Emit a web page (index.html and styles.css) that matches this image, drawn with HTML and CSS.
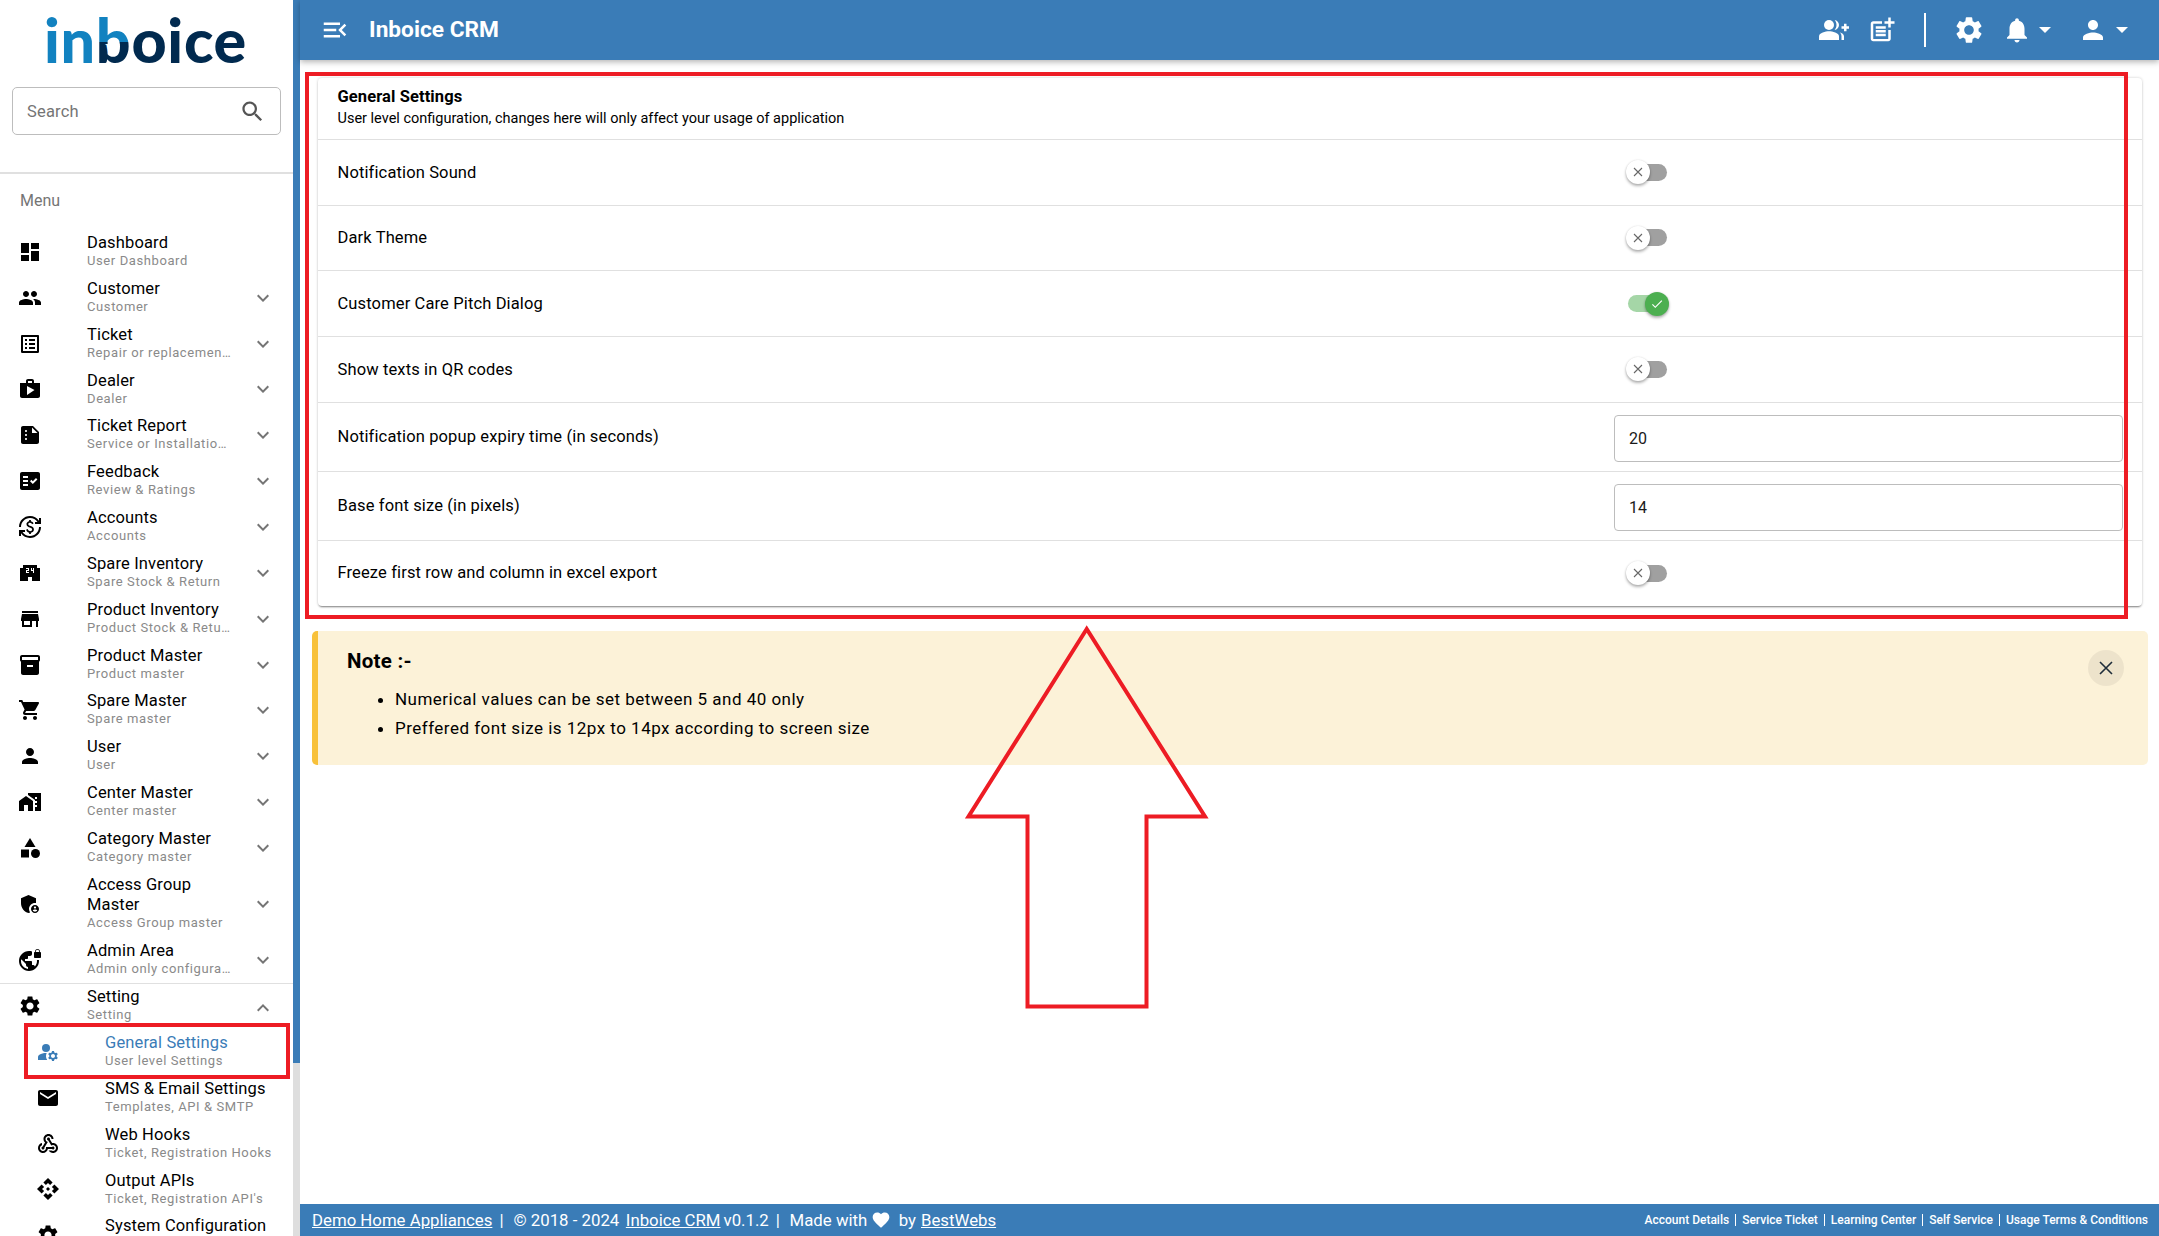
FILE: index.html
```html
<!DOCTYPE html>
<html lang="en">
<head>
<meta charset="utf-8">
<title>Inboice CRM</title>
<link rel="stylesheet" href="styles.css">
</head>
<body>
<svg class="sprite" xmlns="http://www.w3.org/2000/svg">
<symbol id="i-dashboard" viewBox="0 0 24 24"><path d="M3 13h8V3H3v10zm0 8h8v-6H3v6zm10 0h8V11h-8v10zm0-18v6h8V3h-8z"/></symbol>
<symbol id="i-people" viewBox="0 0 24 24"><path d="M16 11c1.66 0 2.99-1.34 2.99-3S17.66 5 16 5c-1.66 0-3 1.34-3 3s1.34 3 3 3zm-8 0c1.66 0 2.99-1.34 2.99-3S9.66 5 8 5C6.34 5 5 6.34 5 8s1.34 3 3 3zm0 2c-2.33 0-7 1.17-7 3.5V19h14v-2.5c0-2.33-4.67-3.5-7-3.5zm8 0c-.29 0-.62.02-.97.05 1.16.84 1.97 1.97 1.97 3.45V19h6v-2.5c0-2.33-4.67-3.5-7-3.5z"/></symbol>
<symbol id="i-list" viewBox="0 0 24 24"><path d="M19 5v14H5V5h14m1.1-2H3.9c-.5 0-.9.4-.9.9v16.2c0 .4.4.9.9.9h16.2c.4 0 .9-.5.9-.9V3.9c0-.5-.5-.9-.9-.9zM11 7h6v2h-6V7zm0 4h6v2h-6v-2zm0 4h6v2h-6zM7 7h2v2H7zm0 4h2v2H7zm0 4h2v2H7z"/></symbol>
<symbol id="i-shop" viewBox="0 0 24 24"><path d="M16 6V4c0-1.11-.89-2-2-2h-4c-1.11 0-2 .89-2 2v2H2v13c0 1.11.89 2 2 2h16c1.11 0 2-.89 2-2V6h-6zM10 4h4v2h-4V4zM9 18V9l7.5 4L9 18z"/></symbol>
<symbol id="i-summarize" viewBox="0 0 24 24"><path d="M15 3H5c-1.1 0-1.99.9-1.99 2L3 19c0 1.1.89 2 1.99 2H19c1.1 0 2-.9 2-2V9l-6-6zM8 17c-.55 0-1-.45-1-1s.45-1 1-1 1 .45 1 1-.45 1-1 1zm0-4c-.55 0-1-.45-1-1s.45-1 1-1 1 .45 1 1-.45 1-1 1zm0-4c-.55 0-1-.45-1-1s.45-1 1-1 1 .45 1 1-.45 1-1 1zm6 1V4.5l5.5 5.5H14z"/></symbol>
<symbol id="i-fact" viewBox="0 0 24 24"><path d="M20 3H4c-1.1 0-2 .9-2 2v14c0 1.1.9 2 2 2h16c1.1 0 2-.9 2-2V5c0-1.1-.9-2-2-2zM10 17H5v-2h5v2zm0-4H5v-2h5v2zm0-4H5V7h5v2zm4.82 6L12 12.16l1.41-1.41 1.41 1.42L17.99 9l1.42 1.42L14.82 15z"/></symbol>
<symbol id="i-exchange" viewBox="0 0 24 24"><path d="M12.89 11.1c-1.78-.59-2.64-.96-2.64-1.9 0-1.02 1.11-1.39 1.81-1.39 1.31 0 1.79.99 1.9 1.34l1.58-.67c-.15-.44-.82-1.91-2.66-2.23V5h-1.75v1.26c-2.6.56-2.62 2.85-2.62 2.96 0 2.27 2.25 2.91 3.35 3.31 1.58.56 2.28 1.07 2.28 2.03 0 1.13-1.05 1.61-1.98 1.61-1.82 0-2.34-1.87-2.4-2.09l-1.66.67c.63 2.19 2.28 2.78 3.02 2.96V19h1.75v-1.24c.52-.09 3.02-.59 3.02-3.22.01-1.39-.6-2.61-3-3.44zM3 21H1v-6h6v2H4.52c1.61 2.41 4.36 4 7.48 4 4.97 0 9-4.03 9-9h2c0 6.08-4.92 11-11 11-3.72 0-7.01-1.85-9-4.67V21zm-2-9C1 5.92 5.92 1 12 1c3.72 0 7.01 1.85 9 4.67V3h2v6h-6V7h2.48C17.87 4.59 15.12 3 12 3c-4.97 0-9 4.03-9 9H1z"/></symbol>
<symbol id="i-conv" viewBox="0 0 24 24"><path d="M19 7V4H5v3H2v13h8v-4h4v4h8V7h-3zm-8 3H9v1h2v1H8V9h2V8H8V7h3v3zm5 2h-1v-2h-2V7h1v2h1V7h1v5z"/></symbol>
<symbol id="i-store" viewBox="0 0 24 24"><path d="M20 4H4v2h16V4zm1 10v-2l-1-5H4l-1 5v2h1v6h10v-6h4v6h2v-6h1zm-9 4H6v-4h6v4z"/></symbol>
<symbol id="i-inventory" viewBox="0 0 24 24"><path d="M20 2H4c-1 0-2 .9-2 2v3.01c0 .72.43 1.34 1 1.69V20c0 1.1 1.1 2 2 2h14c.9 0 2-.9 2-2V8.7c.57-.35 1-.97 1-1.69V4c0-1.1-1-2-2-2zm-5 12H9v-2h6v2zm5-7H4V4h16v3z"/></symbol>
<symbol id="i-cart" viewBox="0 0 24 24"><path d="M7 18c-1.1 0-1.99.9-1.99 2S5.9 22 7 22s2-.9 2-2-.9-2-2-2zM1 2v2h2l3.6 7.59-1.35 2.45c-.16.28-.25.61-.25.96 0 1.1.9 2 2 2h12v-2H7.42c-.14 0-.25-.11-.25-.25l.03-.12.9-1.63h7.45c.75 0 1.41-.41 1.75-1.03l3.58-6.49c.08-.14.12-.31.12-.48 0-.55-.45-1-1-1H5.21l-.94-2H1zm16 16c-1.1 0-1.99.9-1.99 2s.89 2 1.99 2 2-.9 2-2-.9-2-2-2z"/></symbol>
<symbol id="i-person" viewBox="0 0 24 24"><path d="M12 12c2.21 0 4-1.79 4-4s-1.79-4-4-4-4 1.79-4 4 1.79 4 4 4zm0 2c-2.67 0-8 1.34-8 4v2h16v-2c0-2.66-5.33-4-8-4z"/></symbol>
<symbol id="i-home" viewBox="0 0 24 24"><path d="M1 11v10h5v-6h4v6h5V11L8 6z"/><path d="M10 3v1.97l7 5V11h2v2h-2v2h2v2h-2v4h6V3H10zm9 6h-2V7h2v2z"/></symbol>
<symbol id="i-category" viewBox="0 0 24 24"><path d="M12 2l-5.5 9h11z"/><circle cx="17.5" cy="17.5" r="4.5"/><path d="M3 13.5h8v8H3z"/></symbol>
<symbol id="i-admin" viewBox="0 0 24 24"><path d="M17 11c.34 0 .67.04 1 .09V6.27L10.5 3 3 6.27v4.91c0 4.54 3.2 8.79 7.5 9.82.55-.13 1.08-.32 1.6-.55-.69-.98-1.1-2.17-1.1-3.45 0-3.31 2.69-6 6-6z"/><path d="M17 13c-2.21 0-4 1.79-4 4s1.79 4 4 4 4-1.79 4-4-1.79-4-4-4zm0 1.38c.62 0 1.12.51 1.12 1.12s-.51 1.12-1.12 1.12-1.12-.51-1.12-1.12.5-1.12 1.12-1.12zm0 5.37c-.93 0-1.74-.46-2.24-1.17.05-.72 1.51-1.08 2.24-1.08s2.19.36 2.24 1.08c-.5.71-1.31 1.17-2.24 1.17z"/></symbol>
<symbol id="i-vpn" viewBox="0 0 24 24"><path d="M22 4v-.5C22 2.12 20.88 1 19.5 1S17 2.12 17 3.5V4c-.55 0-1 .45-1 1v4c0 .55.45 1 1 1h5c.55 0 1-.45 1-1V5c0-.55-.45-1-1-1zm-.8 0h-3.4v-.5c0-.94.76-1.7 1.7-1.7s1.7.76 1.7 1.7V4zm-2.28 8c.04.33.08.66.08 1 0 2.08-.8 3.97-2.1 5.39-.26-.81-1-1.39-1.9-1.39h-1v-3c0-.55-.45-1-1-1H7v-2h2c.55 0 1-.45 1-1V8h2c1.1 0 2-.9 2-2V3.46c-.95-.3-1.95-.46-3-.46C5.48 3 1 7.48 1 13s4.48 10 10 10 10-4.48 10-10c0-.34-.02-.67-.05-1h-2.03zM10 20.93c-3.95-.49-7-3.85-7-7.93 0-.62.08-1.21.21-1.79L8 16v1c0 1.1.9 2 2 2v1.93z"/></symbol>
<symbol id="i-settings" viewBox="0 0 24 24"><path d="M19.14 12.94c.04-.3.06-.61.06-.94 0-.32-.02-.64-.07-.94l2.03-1.58c.18-.14.23-.41.12-.61l-1.92-3.32c-.12-.22-.37-.29-.59-.22l-2.39.96c-.5-.38-1.03-.7-1.62-.94l-.36-2.54c-.04-.24-.24-.41-.48-.41h-3.84c-.24 0-.43.17-.47.41l-.36 2.54c-.59.24-1.13.57-1.62.94l-2.39-.96c-.22-.08-.47 0-.59.22L2.74 8.87c-.12.21-.08.47.12.61l2.03 1.58c-.05.3-.09.63-.09.94s.02.64.07.94l-2.03 1.58c-.18.14-.23.41-.12.61l1.92 3.32c.12.22.37.29.59.22l2.39-.96c.5.38 1.03.7 1.62.94l.36 2.54c.05.24.24.41.48.41h3.84c.24 0 .44-.17.47-.41l.36-2.54c.59-.24 1.13-.56 1.62-.94l2.39.96c.22.08.47 0 .59-.22l1.92-3.32c.12-.22.07-.47-.12-.61l-2.01-1.58zM12 15.6c-1.98 0-3.6-1.62-3.6-3.6s1.62-3.6 3.6-3.6 3.6 1.62 3.6 3.6-1.62 3.6-3.6 3.6z"/></symbol>
<symbol id="i-manage" viewBox="0 0 24 24"><circle cx="10" cy="8" r="4"/><path d="M10.67 13.02c-.22-.01-.44-.02-.67-.02-2.42 0-4.68.67-6.61 1.82-.88.52-1.39 1.5-1.39 2.53V20h9.26c-.79-1.13-1.26-2.51-1.26-4 0-1.07.25-2.07.67-2.98z"/><path d="M20.75 16c0-.22-.03-.42-.06-.63l1.14-1.01-1-1.73-1.45.49c-.32-.27-.68-.48-1.08-.63L18 11h-2l-.3 1.49c-.4.15-.76.36-1.08.63l-1.45-.49-1 1.73 1.14 1.01c-.03.21-.06.41-.06.63s.03.42.06.63l-1.14 1.01 1 1.73 1.45-.49c.32.27.68.48 1.08.63L16 21h2l.3-1.49c.4-.15.76-.36 1.08-.63l1.45.49 1-1.73-1.14-1.01c.03-.21.06-.41.06-.63zM17 18c-1.1 0-2-.9-2-2s.9-2 2-2 2 .9 2 2-.9 2-2 2z"/></symbol>
<symbol id="i-email" viewBox="0 0 24 24"><path d="M20 4H4c-1.1 0-1.99.9-1.99 2L2 18c0 1.1.9 2 2 2h16c1.1 0 2-.9 2-2V6c0-1.1-.9-2-2-2zm0 4l-8 5-8-5V6l8 5 8-5v2z"/></symbol>
<symbol id="i-webhook" viewBox="0 0 24 24"><path d="M10 15h5.88c.27-.31.67-.5 1.12-.5.83 0 1.5.67 1.5 1.5s-.67 1.5-1.5 1.5c-.44 0-.84-.19-1.12-.5H11.9c-.46 2.28-2.48 4-4.9 4-2.76 0-5-2.24-5-5 0-2.42 1.72-4.44 4-4.9v2.07c-1.16.41-2 1.53-2 2.83 0 1.65 1.35 3 3 3s3-1.35 3-3v-1zm2.5-11c1.65 0 3 1.35 3 3h2c0-2.76-2.24-5-5-5s-5 2.24-5 5c0 1.43.6 2.71 1.55 3.62l-2.35 3.9c-.68.14-1.2.75-1.2 1.48 0 .83.67 1.5 1.5 1.5s1.5-.67 1.5-1.5c0-.16-.02-.31-.07-.45l3.38-5.63C10.49 9.61 9.5 8.42 9.5 7c0-1.65 1.35-3 3-3zm4.5 9c-.64 0-1.23.2-1.72.54l-3.05-5.07C11.53 8.35 11 7.74 11 7c0-.83.67-1.5 1.5-1.5S14 6.17 14 7c0 .15-.02.29-.06.43l2.19 3.65c.28-.05.57-.08.87-.08 2.76 0 5 2.24 5 5s-2.24 5-5 5c-1.85 0-3.47-1.01-4.33-2.5h2.67c.48.32 1.05.5 1.66.5 1.65 0 3-1.35 3-3s-1.35-3-3-3z"/></symbol>
<symbol id="i-api" viewBox="0 0 24 24"><path d="M14 12l-2 2-2-2 2-2 2 2zm-2-6l2.12 2.12 2.5-2.5L12 1 7.38 5.62l2.5 2.5L12 6zm-6 6l2.12-2.12-2.5-2.5L1 12l4.62 4.62 2.5-2.5L6 12zm12 0l-2.12 2.12 2.5 2.5L23 12l-4.62-4.62-2.5 2.5L18 12zm-6 6l-2.12-2.12-2.5 2.5L12 23l4.62-4.62-2.5-2.5L12 18z"/></symbol>
<symbol id="i-more" viewBox="0 0 24 24"><path d="M16.59 8.59L12 13.17 7.41 8.59 6 10l6 6 6-6z"/></symbol>
<symbol id="i-less" viewBox="0 0 24 24"><path d="M12 8l-6 6 1.41 1.41L12 10.83l4.59 4.58L18 14z"/></symbol>
<symbol id="i-search" viewBox="0 0 24 24"><path d="M15.5 14h-.79l-.28-.27C15.41 12.59 16 11.11 16 9.5 16 5.91 13.09 3 9.5 3S3 5.91 3 9.5 5.91 16 9.5 16c1.61 0 3.09-.59 4.23-1.57l.27.28v.79l5 4.99L20.49 19l-4.99-5zm-6 0C7.01 14 5 11.99 5 9.5S7.01 5 9.5 5 14 7.01 14 9.5 11.99 14 9.5 14z"/></symbol>
<symbol id="i-menuopen" viewBox="0 0 24 24"><path d="M3 18h13v-2H3v2zm0-5h10v-2H3v2zm0-7v2h13V6H3zm18 9.59L17.42 12 21 8.41 19.59 7l-5 5 5 5L21 15.59z"/></symbol>
<symbol id="i-groupadd" viewBox="0 0 24 24"><path d="M22 9V7h-2v2h-2v2h2v2h2v-2h2V9h-2z"/><circle cx="8" cy="8" r="4"/><path d="M8 13c-2.67 0-8 1.34-8 4v3h16v-3c0-2.66-5.33-4-8-4z"/><path d="M12.51 4.05C13.43 5.11 14 6.49 14 8s-.57 2.89-1.49 3.95C14.47 11.7 16 10.04 16 8s-1.53-3.7-3.49-3.95z"/><path d="M16.53 13.83C17.42 14.66 18 15.7 18 17v3h2v-3c0-1.45-1.59-2.51-3.47-3.17z"/></symbol>
<symbol id="i-postadd" viewBox="0 0 24 24"><path d="M17 19.22H5V7h7V5H5c-1.1 0-2 .9-2 2v12c0 1.1.9 2 2 2h12c1.1 0 2-.9 2-2v-7h-2v7.22z"/><path d="M19 2h-2v3h-3c.01.01 0 2 0 2h3v2.99c.01.01 2 0 2 0V7h3V5h-3V2z"/><path d="M7 9h8v2H7zM7 12v2h8v-2h-3zM7 15h8v2H7z"/></symbol>
<symbol id="i-bell" viewBox="0 0 24 24"><path d="M12 22c1.1 0 2-.9 2-2h-4c0 1.1.89 2 2 2zm6-6v-5c0-3.07-1.64-5.64-4.5-6.32V4c0-.83-.67-1.5-1.5-1.5s-1.5.67-1.5 1.5v.68C7.63 5.36 6 7.92 6 11v5l-2 2v1h16v-1l-2-2z"/></symbol>
<symbol id="i-close" viewBox="0 0 24 24"><path class="thin" d="M6 6l12 12M18 6L6 18"/></symbol>
<symbol id="i-check" viewBox="0 0 24 24"><path d="M9 16.17L4.83 12l-1.42 1.41L9 19 21 7l-1.41-1.41z"/></symbol>
<symbol id="i-heart" viewBox="0 0 24 24"><path d="M12 21.35l-1.45-1.32C5.4 15.36 2 12.28 2 8.5 2 5.42 4.42 3 7.5 3c1.74 0 3.41.81 4.5 2.09C13.09 3.81 14.76 3 16.5 3 19.58 3 22 5.42 22 8.5c0 3.78-3.4 6.86-8.55 11.54L12 21.35z"/></symbol>
</svg>

<div class="app">
  <aside class="sidebar">
    <div class="side-panel">
      <div class="brand">
        <div class="logo"><span class="logo-in">in</span><span class="logo-b">b<span class="logo-w">w</span></span><span class="logo-oice">oice</span></div>
      </div>
      <div class="search">
        <span class="search-text">Search</span>
        <svg class="search-icon"><use href="#i-search"/></svg>
      </div>
      <div class="menu-label">Menu</div>
      <nav class="nav">
        <a class="item"><svg class="ico"><use href="#i-dashboard"/></svg><span class="txt"><span class="ttl">Dashboard</span><span class="sub">User Dashboard</span></span></a>
        <a class="item"><svg class="ico"><use href="#i-people"/></svg><span class="txt"><span class="ttl">Customer</span><span class="sub">Customer</span></span><svg class="chev"><use href="#i-more"/></svg></a>
        <a class="item"><svg class="ico"><use href="#i-list"/></svg><span class="txt"><span class="ttl">Ticket</span><span class="sub">Repair or replacemen…</span></span><svg class="chev"><use href="#i-more"/></svg></a>
        <a class="item"><svg class="ico"><use href="#i-shop"/></svg><span class="txt"><span class="ttl">Dealer</span><span class="sub">Dealer</span></span><svg class="chev"><use href="#i-more"/></svg></a>
        <a class="item"><svg class="ico"><use href="#i-summarize"/></svg><span class="txt"><span class="ttl">Ticket Report</span><span class="sub">Service or Installatio…</span></span><svg class="chev"><use href="#i-more"/></svg></a>
        <a class="item"><svg class="ico"><use href="#i-fact"/></svg><span class="txt"><span class="ttl">Feedback</span><span class="sub">Review &amp; Ratings</span></span><svg class="chev"><use href="#i-more"/></svg></a>
        <a class="item"><svg class="ico"><use href="#i-exchange"/></svg><span class="txt"><span class="ttl">Accounts</span><span class="sub">Accounts</span></span><svg class="chev"><use href="#i-more"/></svg></a>
        <a class="item"><svg class="ico"><use href="#i-conv"/></svg><span class="txt"><span class="ttl">Spare Inventory</span><span class="sub">Spare Stock &amp; Return</span></span><svg class="chev"><use href="#i-more"/></svg></a>
        <a class="item"><svg class="ico"><use href="#i-store"/></svg><span class="txt"><span class="ttl">Product Inventory</span><span class="sub">Product Stock &amp; Retu…</span></span><svg class="chev"><use href="#i-more"/></svg></a>
        <a class="item"><svg class="ico"><use href="#i-inventory"/></svg><span class="txt"><span class="ttl">Product Master</span><span class="sub">Product master</span></span><svg class="chev"><use href="#i-more"/></svg></a>
        <a class="item"><svg class="ico"><use href="#i-cart"/></svg><span class="txt"><span class="ttl">Spare Master</span><span class="sub">Spare master</span></span><svg class="chev"><use href="#i-more"/></svg></a>
        <a class="item"><svg class="ico"><use href="#i-person"/></svg><span class="txt"><span class="ttl">User</span><span class="sub">User</span></span><svg class="chev"><use href="#i-more"/></svg></a>
        <a class="item"><svg class="ico"><use href="#i-home"/></svg><span class="txt"><span class="ttl">Center Master</span><span class="sub">Center master</span></span><svg class="chev"><use href="#i-more"/></svg></a>
        <a class="item"><svg class="ico"><use href="#i-category"/></svg><span class="txt"><span class="ttl">Category Master</span><span class="sub">Category master</span></span><svg class="chev"><use href="#i-more"/></svg></a>
        <a class="item"><svg class="ico"><use href="#i-admin"/></svg><span class="txt"><span class="ttl">Access Group Master</span><span class="sub">Access Group master</span></span><svg class="chev"><use href="#i-more"/></svg></a>
        <a class="item"><svg class="ico"><use href="#i-vpn"/></svg><span class="txt"><span class="ttl">Admin Area</span><span class="sub">Admin only configura…</span></span><svg class="chev"><use href="#i-more"/></svg></a>
        <a class="item item-open"><svg class="ico"><use href="#i-settings"/></svg><span class="txt"><span class="ttl">Setting</span><span class="sub">Setting</span></span><svg class="chev"><use href="#i-less"/></svg></a>
        <a class="item child active"><svg class="ico"><use href="#i-manage"/></svg><span class="txt"><span class="ttl">General Settings</span><span class="sub">User level Settings</span></span></a>
        <a class="item child"><svg class="ico"><use href="#i-email"/></svg><span class="txt"><span class="ttl">SMS &amp; Email Settings</span><span class="sub">Templates, API &amp; SMTP</span></span></a>
        <a class="item child"><svg class="ico"><use href="#i-webhook"/></svg><span class="txt"><span class="ttl">Web Hooks</span><span class="sub">Ticket, Registration Hooks</span></span></a>
        <a class="item child"><svg class="ico"><use href="#i-api"/></svg><span class="txt"><span class="ttl">Output APIs</span><span class="sub">Ticket, Registration API's</span></span></a>
        <a class="item child item-end"><svg class="ico"><use href="#i-settings"/></svg><span class="txt"><span class="ttl">System Configuration</span></span></a>
      </nav>
    </div>
    <div class="scrollbar"><div class="scroll-thumb"></div></div>
  </aside>

  <div class="main">
    <header class="topbar">
      <svg class="top-menu"><use href="#i-menuopen"/></svg>
      <h1 class="brand-title">Inboice CRM</h1>
      <div class="top-actions">
        <svg class="top-ico"><use href="#i-groupadd"/></svg>
        <svg class="top-ico top-post"><use href="#i-postadd"/></svg>
        <span class="top-sep"></span>
        <svg class="top-ico top-gear"><use href="#i-settings"/></svg>
        <svg class="top-ico top-bell"><use href="#i-bell"/></svg>
        <span class="caret"></span>
        <svg class="top-ico top-user"><use href="#i-person"/></svg>
        <span class="caret"></span>
      </div>
    </header>

    <main class="content">
      <section class="card">
        <div class="card-head">
          <div class="card-title">General Settings</div>
          <div class="card-sub">User level configuration, changes here will only affect your usage of application</div>
        </div>
        <div class="row"><div class="label">Notification Sound</div><div class="value"><span class="switch"><span class="thumb"><svg class="thumb-ico"><use href="#i-close"/></svg></span></span></div></div>
        <div class="row"><div class="label">Dark Theme</div><div class="value"><span class="switch"><span class="thumb"><svg class="thumb-ico"><use href="#i-close"/></svg></span></span></div></div>
        <div class="row"><div class="label">Customer Care Pitch Dialog</div><div class="value"><span class="switch on"><span class="thumb"><svg class="thumb-ico"><use href="#i-check"/></svg></span></span></div></div>
        <div class="row"><div class="label">Show texts in QR codes</div><div class="value"><span class="switch"><span class="thumb"><svg class="thumb-ico"><use href="#i-close"/></svg></span></span></div></div>
        <div class="row row-input"><div class="label">Notification popup expiry time (in seconds)</div><div class="value"><input class="field" type="text" value="20"></div></div>
        <div class="row row-input"><div class="label">Base font size (in pixels)</div><div class="value"><input class="field" type="text" value="14"></div></div>
        <div class="row row-last"><div class="label">Freeze first row and column in excel export</div><div class="value"><span class="switch"><span class="thumb"><svg class="thumb-ico"><use href="#i-close"/></svg></span></span></div></div>
      </section>

      <section class="note">
        <div class="note-body">
          <div class="note-title">Note :-</div>
          <ul class="note-list">
            <li>Numerical values can be set between 5 and 40 only</li>
            <li>Preffered font size is 12px to 14px according to screen size</li>
          </ul>
        </div>
        <button class="note-close" type="button" aria-label="Close"><svg class="note-x"><use href="#i-close"/></svg></button>
      </section>
    </main>

    <footer class="footer">
      <div class="foot-left">
        <a class="flink">Demo Home Appliances</a><span class="fsep">|</span><span>© 2018 - 2024</span><a class="flink flink-app">Inboice CRM</a><span class="fver">v0.1.2</span><span class="fsep fsep-two">|</span><span>Made with</span><svg class="heart"><use href="#i-heart"/></svg><span>by</span><a class="flink">BestWebs</a>
      </div>
      <div class="foot-right">
        <a class="rlink">Account Details</a><a class="rlink">Service Ticket</a><a class="rlink">Learning Center</a><a class="rlink">Self Service</a><a class="rlink">Usage Terms &amp; Conditions</a>
      </div>
    </footer>
  </div>
</div>

<div class="mark mark-panel"></div>
<div class="mark mark-item"></div>
<svg class="mark-arrow" viewBox="0 0 2159 1236"><polygon points="1086.7,629 968.5,816.5 1027.5,816.5 1027.5,1006.5 1146.5,1006.5 1146.5,816.5 1205,816.5"/></svg>
</body>
</html>
```

FILE: styles.css
```css
* { box-sizing: border-box; }
html, body { margin: 0; height: 100%; }
body {
  font-family: Roboto, "Noto Sans", sans-serif;
  color: #000;
  background: #fff;
  overflow: hidden;
  position: relative;
}
.sprite { position: absolute; width: 0; height: 0; }
.thin { fill: none; stroke: currentColor; stroke-width: 1.6; }
.app { display: flex; height: 1236px; }

/* sidebar */
.sidebar { width: 300px; flex: none; display: flex; height: 100%; overflow: hidden; background: #fff; }
.side-panel { width: 293px; flex: none; overflow: hidden; }
.scrollbar { width: 6.5px; height: 100%; background: #dedede; }
.scroll-thumb { height: 1063px; background: #3a7cb7; }
.brand { height: 87px; padding: 0 0 0 44px; }
.logo {
  font-family: Lato, "Open Sans", sans-serif;
  font-weight: 900;
  font-size: 61px;
  line-height: 80px;
  letter-spacing: .7px;
  white-space: nowrap;
  display: flex;
}
.logo-in { color: #1282c0; }
.logo-oice { color: #012a4f; }
.logo-b {
  position: relative;
  background: linear-gradient(#1282c0 0 52%, #012a4f 52%);
  -webkit-background-clip: text;
  background-clip: text;
  color: transparent;
}
.logo-w {
  position: absolute;
  left: 9px;
  top: 36px;
  font: italic 400 22px/22px "Liberation Serif", serif;
  color: #fff;
  letter-spacing: 0;
}
.search {
  margin: 0 12px;
  height: 48px;
  border: 1px solid #bdbdbd;
  border-radius: 5px;
  display: flex;
  align-items: center;
  justify-content: space-between;
  padding: 0 14px 0 14px;
}
.search-text { font-size: 16.5px; color: #757575; letter-spacing: .2px; }
.search-icon { width: 27px; height: 27px; fill: #555; }
.menu-label {
  margin-top: 37px;
  border-top: 2px solid #e0e0e0;
  padding: 17px 0 0 20px;
  height: 57px;
  font-size: 16px;
  line-height: 20px;
  color: #757575;
}
.nav { display: flex; flex-direction: column; }
.item {
  display: flex;
  align-items: center;
  padding: 4px 18px;
  min-height: 45.85px;
  flex: none;
}
.item-open { border-top: 1px solid #e0e0e0; padding-top: 3px; margin-bottom: .7px; }
.item-open .ico { margin-top: 2px; }
.item-open .chev { margin-top: 5px; }
.ico { width: 24px; height: 24px; flex: none; fill: #000; }
.txt { width: 145px; margin-left: 45px; display: flex; flex-direction: column; min-width: 0; }
.ttl { font-size: 16.5px; line-height: 20px; letter-spacing: .15px; color: #000; }
.sub {
  font-size: 13px;
  line-height: 19.85px;
  margin-top: -2px;
  letter-spacing: .6px;
  color: #8a8a8a;
  white-space: nowrap;
}
.chev { width: 24px; height: 24px; flex: none; fill: #757575; margin-left: 19px; }
.child { padding-left: 36px; }
.child .txt { width: 175px; }
.item-end { min-height: 0; align-items: flex-start; }
.item-end .ico { margin-top: 7px; }
.active .ico { fill: #3a7cb7; }
.active .ttl { color: #3a7cb7; }

/* main */
.main { flex: 1; min-width: 0; display: flex; flex-direction: column; height: 100%; }
.topbar {
  height: 60px;
  flex: none;
  background: #3a7cb7;
  color: #fff;
  display: flex;
  align-items: center;
  padding: 0 0 0 20px;
  box-shadow: 0 2px 6px rgba(0,0,0,.3);
  position: relative;
}
.top-menu { width: 30px; height: 30px; fill: #fff; flex: none; }
.brand-title { margin: 0 0 0 19px; font-size: 22.7px; font-weight: 700; letter-spacing: 0; line-height: 60px; height: 60px; }
.top-actions { margin-left: auto; display: flex; align-items: center; padding-right: 31.4px; }
.top-ico { width: 30px; height: 30px; fill: #fff; flex: none; }
.top-post { margin-left: 18px; }
.top-sep { width: 2px; height: 34px; background: #fff; margin: 0 26.6px 0 27px; }
.top-gear { width: 32px; height: 32px; }
.top-bell { margin-left: 17px; }
.top-user { margin-left: 27px; }
.caret {
  width: 0; height: 0;
  margin-left: 6.7px;
  border-left: 6px solid transparent;
  border-right: 6px solid transparent;
  border-top: 6px solid #fff;
}
.top-user + .caret { margin-left: 8px; }

.content { flex: 1; padding: 18px 11px 0 12px; min-height: 0; }
.card {
  margin: 0 6px 0 6px;
  height: 528px;
  background: #fff;
  border-radius: 4px;
  box-shadow: 0 2px 2px -1px rgba(0,0,0,.45), 0 0 3px rgba(0,0,0,.2);
}
.card-head {
  height: 62px;
  padding: 10px 20px 0 19.5px;
  border-bottom: 1px solid #e0e0e0;
}
.card-title { font-size: 16.5px; font-weight: 700; line-height: 18px; letter-spacing: .1px; }
.card-sub { font-size: 14.5px; line-height: 20px; margin-top: 3px; letter-spacing: 0; }
.row {
  display: grid;
  grid-template-columns: 1276.5px 1fr;
  align-items: center;
  padding: 0 19px 0 19.5px;
  height: 65.67px;
  border-bottom: 1px solid #e0e0e0;
}
.row-input { height: 69px; }
.row-last { height: 65.3px; border-bottom: 0; }
.row-last .label { margin-top: -2px; }
.label { font-size: 16.5px; letter-spacing: .13px; }
.value { display: flex; align-items: center; }
.row-input .value { padding-top: 4px; }
.switch {
  position: relative;
  display: block;
  margin-left: 14px;
  width: 39px;
  height: 17px;
  border-radius: 9px;
  background: #a0a0a0;
}
.thumb {
  position: absolute;
  left: -2px;
  top: -3.5px;
  width: 24px;
  height: 24px;
  border-radius: 50%;
  background: #fff;
  color: #666;
  box-shadow: 0 2px 3px rgba(0,0,0,.3), 0 0 2px rgba(0,0,0,.12);
  display: flex;
  align-items: center;
  justify-content: center;
}
.thumb-ico { width: 16px; height: 16px; fill: #fff; }
.switch.on { background: #a5d6a7; }
.switch.on .thumb { left: 17px; background: #4caf50; }
.switch.on .thumb-ico { width: 14px; height: 14px; }
.field {
  display: block;
  width: 100%;
  height: 47.5px;
  padding: 0 14px;
  border: 1px solid #bdbdbd;
  border-radius: 4px;
  font: 400 16px Roboto, sans-serif;
  color: #1a1a1a;
  outline: 0;
}

.note {
  margin-top: 25px;
  height: 134px;
  background: #fcf2d8;
  border-left: 6px solid #f8c13a;
  border-radius: 5px;
  display: flex;
  justify-content: space-between;
  padding: 18px 24px 0 29px;
}
.note-title { font-size: 20.5px; font-weight: 700; line-height: 24px; letter-spacing: .25px; }
.note-list { margin: 12px 0 0; padding: 0 0 0 48px; font-size: 17px; line-height: 29px; letter-spacing: .48px; }
.note-close {
  width: 36px; height: 36px;
  margin-top: .5px;
  flex: none;
  border: 0;
  border-radius: 50%;
  background: rgba(0,0,0,.06);
  padding: 6px;
  display: block;
  color: #1f2d3a;
}
.note-x { display: block; width: 24px; height: 24px; }

.footer {
  height: 32px;
  flex: none;
  background: #3a7cb7;
  color: #fff;
  display: flex;
  align-items: center;
  justify-content: space-between;
  padding: 0 11px 0 12px;
}
.foot-left { display: flex; align-items: center; font-size: 16.8px; gap: 5px; }
.flink { text-decoration: underline; }
.flink-app { margin-left: 1.6px; }
.fver { margin-left: -2px; }
.fsep { margin: 0 5px 0 2px; }
.fsep-two { margin: 0 4.7px 0 2px; }
.heart { width: 20px; height: 20px; fill: #fff; margin: 0 2.4px 0 -1px; }
.foot-right { display: flex; align-items: center; font-size: 12px; font-weight: 500; }
.rlink { padding: 0 6px; line-height: 12px; border-right: 1px solid #fff; }
.rlink:last-child { border-right: 0; padding-right: 0; }

/* red annotations drawn over the screenshot */
.mark { position: absolute; border: 4.7px solid #ed1c24; pointer-events: none; }
.mark-panel { left: 305px; top: 72px; width: 1823px; height: 547px; }
.mark-item { left: 24px; top: 1023px; width: 266px; height: 56px; }
.mark-arrow { position: absolute; left: 0; top: 0; width: 2159px; height: 1236px; pointer-events: none; }
.mark-arrow polygon { fill: none; stroke: #ed1c24; stroke-width: 4px; stroke-linejoin: miter; }
```
